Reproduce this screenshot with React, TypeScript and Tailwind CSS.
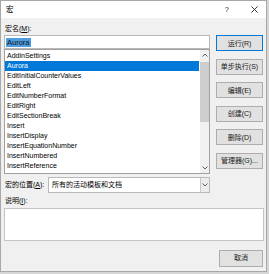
import React from "react";

const F = { fontFamily: '"Liberation Sans", "Noto Sans CJK SC", sans-serif' };

const items = [
  "AddinSettings",
  "Aurora",
  "EditInitialCounterValues",
  "EditLeft",
  "EditNumberFormat",
  "EditRight",
  "EditSectionBreak",
  "Insert",
  "InsertDisplay",
  "InsertEquationNumber",
  "InsertNumbered",
  "InsertReference",
];

function Btn({ label, primary }: { label: string; primary?: boolean }) {
  return (
    <div
      className={
        "h-[16px] w-[47px] flex items-center justify-center text-[7px] leading-none text-[#1a1a1a] bg-[#e1e1e1] border " +
        (primary ? "border-[#0078d7]" : "border-[#adadad]")
      }
    >
      {label}
    </div>
  );
}

function Chevron({ up }: { up?: boolean }) {
  return (
    <svg width="6" height="4" viewBox="0 0 6 4">
      <path
        d={up ? "M0.5 3.5 L3 1 L5.5 3.5" : "M0.5 0.5 L3 3 L5.5 0.5"}
        fill="none"
        stroke="#606060"
        strokeWidth="1"
      />
    </svg>
  );
}

export default function App() {
  return (
    <div className="w-[269px] h-[274px] bg-[#d6d6d6] overflow-hidden" style={F}>
      <div className="w-[267px] h-[272px] border border-[#a8a8a8] bg-[#f0f0f0] flex flex-col">
        {/* title bar */}
        <div className="h-[17px] bg-white flex items-center text-[7.5px] text-black">
          <span className="ml-[5px]">宏</span>
          <span className="ml-auto mr-[22px] text-[8px] text-[#333]">?</span>
          <svg width="7" height="7" viewBox="0 0 7 7" className="mr-[8px]">
            <path d="M0.5 0.5 L6.5 6.5 M6.5 0.5 L0.5 6.5" stroke="#222" strokeWidth="0.9" />
          </svg>
        </div>
        {/* body */}
        <div className="flex-1 flex flex-col px-[3px] pt-[6px] pb-[4px]">
          <div className="flex gap-[6px]">
            <div className="w-[206px] flex flex-col">
              <div className="h-[10px] leading-[10px] text-[7px] text-black pl-[1px]">
                宏名(<span className="underline">M</span>):
              </div>
              <div className="mt-[1px] h-[14px] bg-white border border-[#b9b9b9] flex items-center pl-[1px]">
                <span className="bg-[#4d9de0] text-[#111] text-[7.5px] leading-[9px] px-[1px]">Aurora</span>
              </div>
              <div className="h-[125px] bg-white border border-[#a0a0a0] flex">
                <div className="flex-1 flex flex-col pt-[1px]">
                  {items.map((it) => (
                    <div
                      key={it}
                      className={
                        "h-[10px] leading-[10px] text-[7px] pl-[2px] mr-[1px] " +
                        (it === "Aurora" ? "bg-[#0078d7] text-white" : "text-black")
                      }
                    >
                      {it}
                    </div>
                  ))}
                </div>
                <div className="w-[9px] bg-[#f0f0f0] flex flex-col items-center">
                  <div className="h-[10px] flex items-center justify-center">
                    <Chevron up />
                  </div>
                  <div className="mt-[2px] h-[60px] w-[9px] bg-[#cdcdcd]" />
                  <div className="flex-1" />
                  <div className="h-[10px] flex items-center justify-center">
                    <Chevron />
                  </div>
                </div>
              </div>
              <div className="mt-[3px] flex items-center">
                <div className="w-[44px] text-[7px] text-black pl-[1px] whitespace-nowrap">
                  宏的位置(<span className="underline">A</span>):
                </div>
                <div className="flex-1 h-[16px] bg-white border border-[#b9b9b9] flex">
                  <div className="flex-1 flex items-center pl-[3px] text-[7px] text-black">所有的活动模板和文档</div>
                  <div className="w-[9px] bg-[#ececec] border-l border-[#c8c8c8] flex items-center justify-center">
                    <Chevron />
                  </div>
                </div>
              </div>
            </div>
            <div className="w-[47px] flex flex-col gap-[7.5px] pt-[11px]">
              <Btn label="运行(R)" primary />
              <Btn label="单步执行(S)" />
              <Btn label="编辑(E)" />
              <Btn label="创建(C)" />
              <Btn label="删除(D)" />
              <Btn label="管理器(G)..." />
            </div>
          </div>
          <div className="mt-[3px] h-[10px] leading-[10px] text-[7px] text-black pl-[1px]">
            说明(<span className="underline">I</span>):
          </div>
          <div className="mt-[2px] h-[33px] mr-[-1px] bg-white border border-[#c4c4c4]" />
          <div className="mt-[9px] flex justify-end">
            <div className="h-[17px] w-[44px] flex items-center justify-center text-[7px] text-[#1a1a1a] bg-[#e1e1e1] border border-[#adadad]">
              取消
            </div>
          </div>
        </div>
      </div>
    </div>
  );
}
